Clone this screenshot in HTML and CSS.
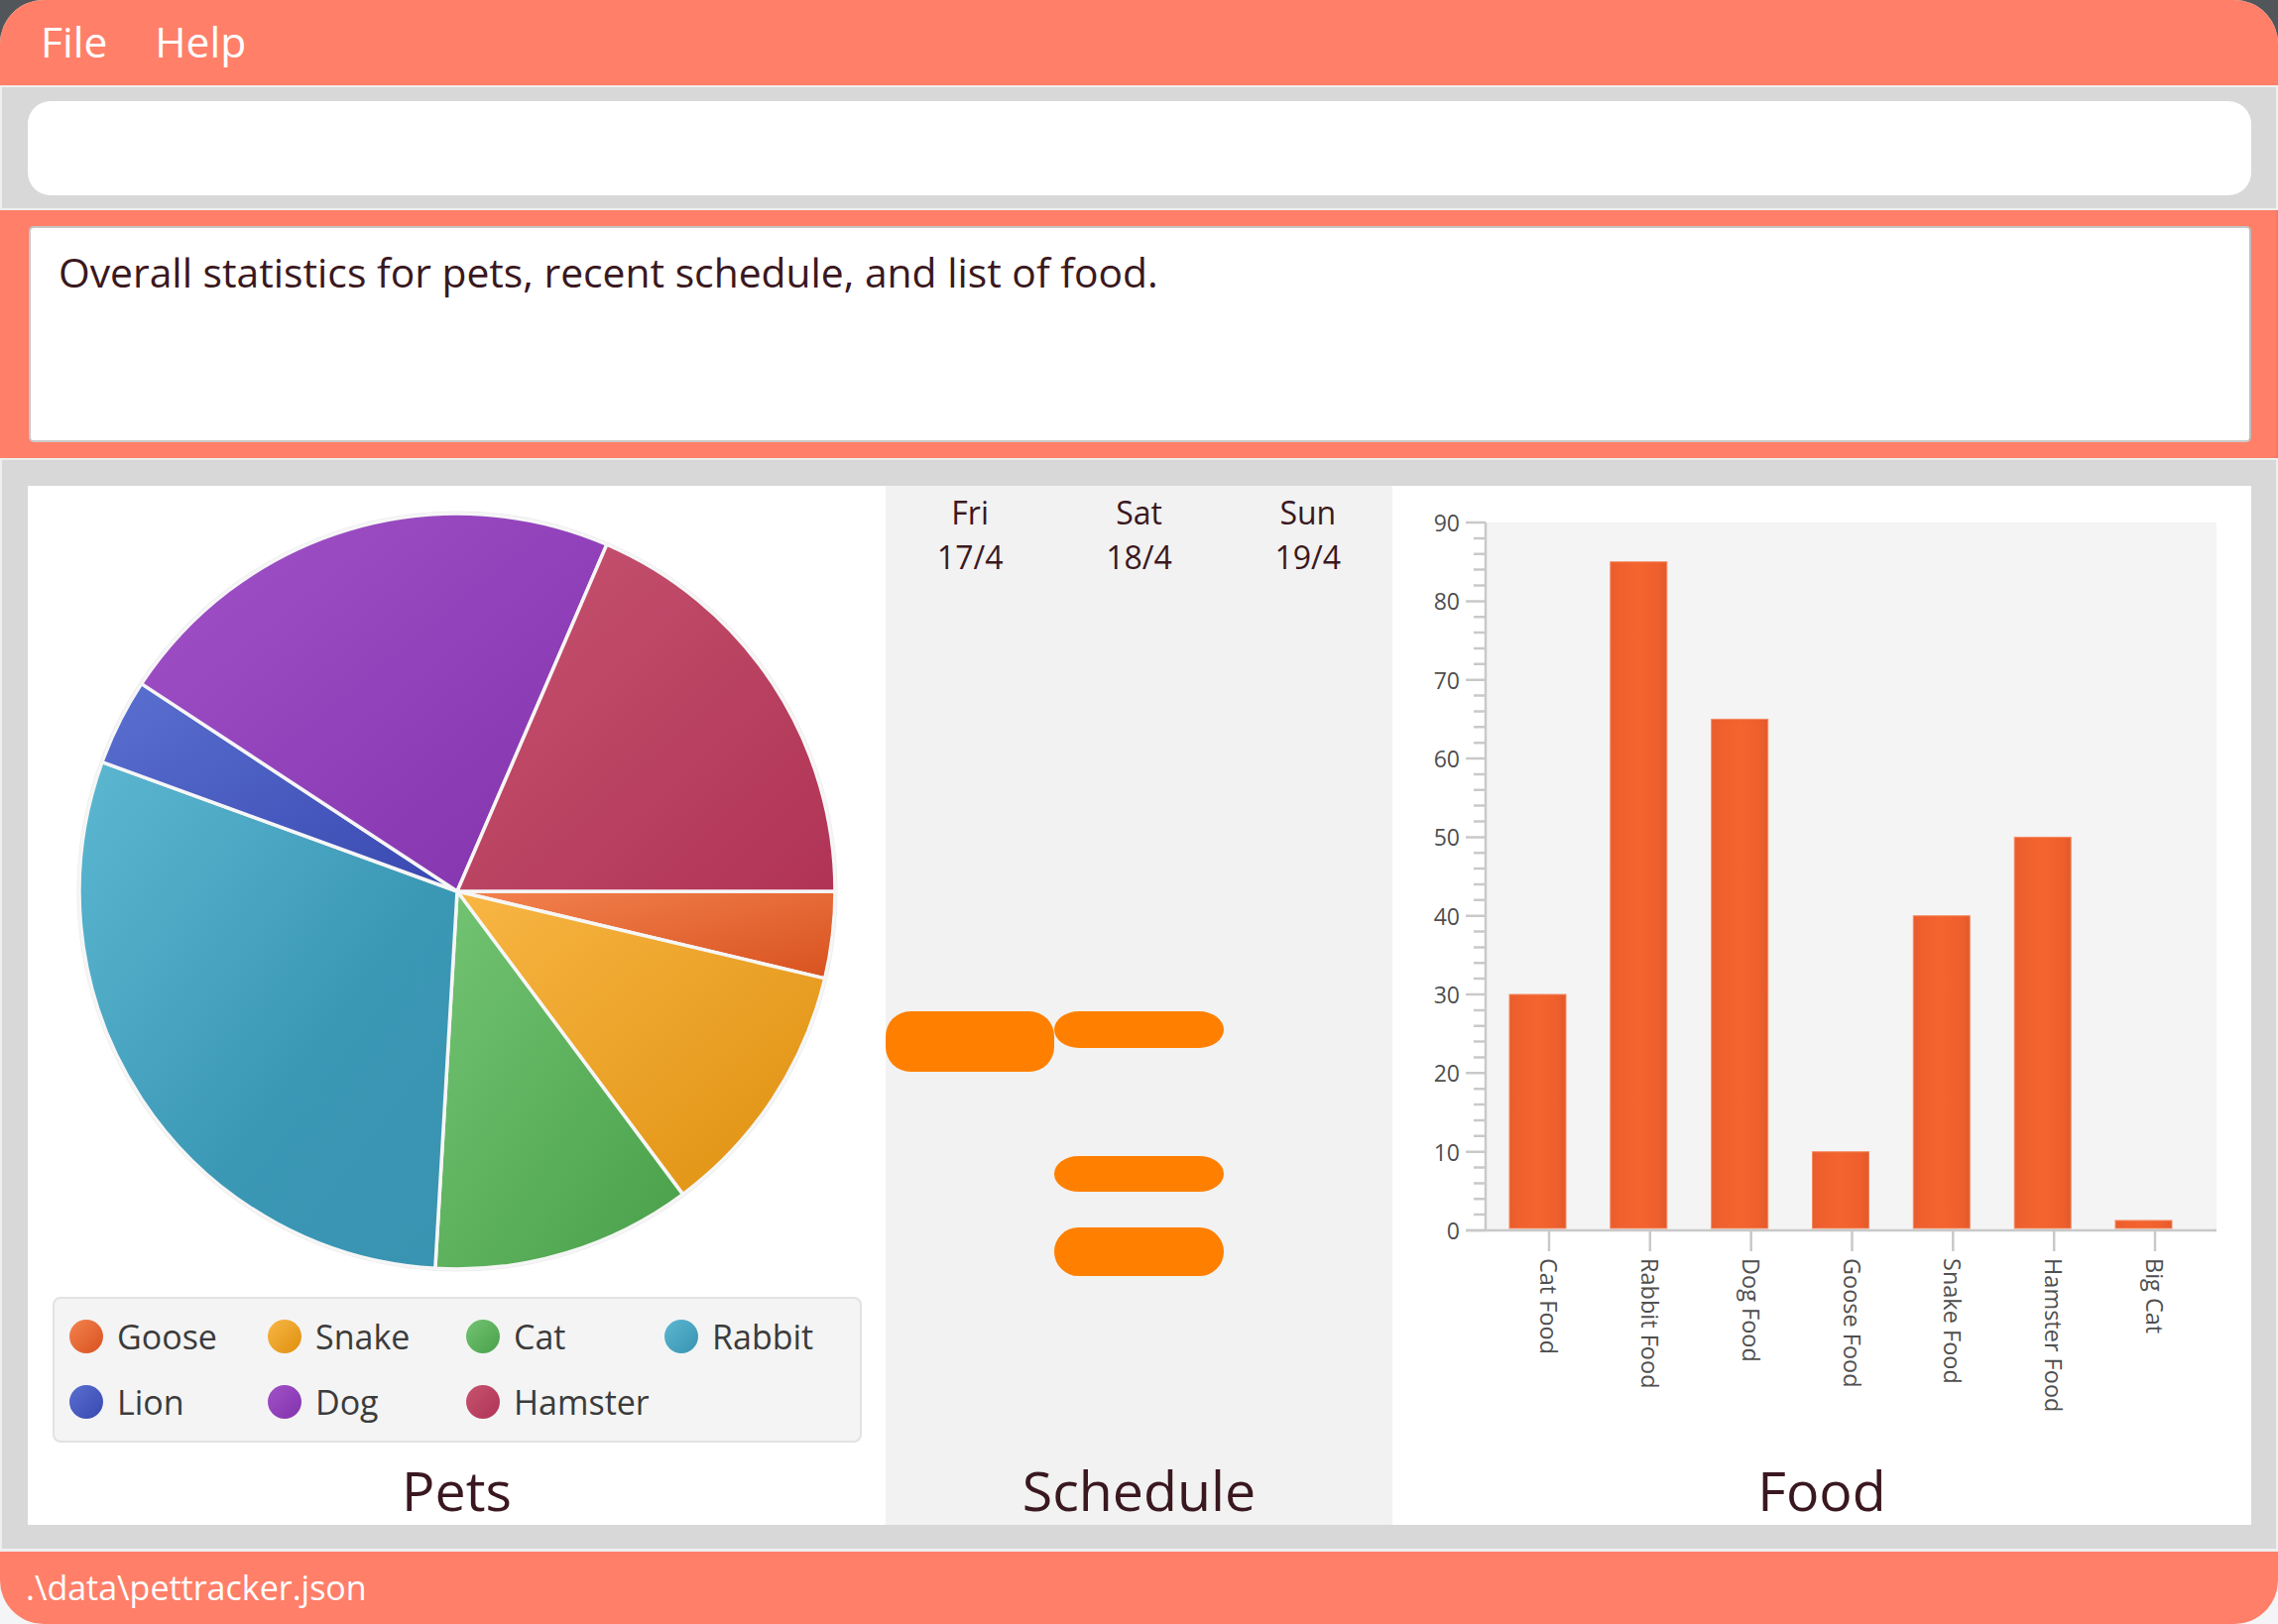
FILE: index.html
```html
<!DOCTYPE html>
<html lang="en">
<head>
<meta charset="utf-8">
<title>Pet Tracker</title>
<link rel="stylesheet" href="styles.css">
</head>
<body>
<div class="app">
  <div class="menubar">
    <span class="menu-item">File</span>
    <span class="menu-item">Help</span>
  </div>

  <div class="cmd-section">
    <div class="cmd-box"></div>
  </div>

  <div class="result-section">
    <div class="result-box">Overall statistics for pets, recent schedule, and list of food.</div>
  </div>

  <div class="main-section">
    <div class="panel">
      <div class="col pets">
        <svg class="pie" width="865" height="800" viewBox="0 0 865 800">
          <defs>
            <linearGradient id="g-goose" x1="0" y1="0" x2="1" y2="1"><stop offset="0" stop-color="#f3834f"/><stop offset="1" stop-color="#d8521f"/></linearGradient>
            <linearGradient id="g-snake" x1="0" y1="0" x2="1" y2="1"><stop offset="0" stop-color="#f8b644"/><stop offset="1" stop-color="#df900f"/></linearGradient>
            <linearGradient id="g-cat" x1="0" y1="0" x2="1" y2="1"><stop offset="0" stop-color="#73c473"/><stop offset="1" stop-color="#49a049"/></linearGradient>
            <linearGradient id="g-rabbit" x1="0" y1="0" x2="1" y2="1"><stop offset="0" stop-color="#5cb7d1"/><stop offset="0.6" stop-color="#3b98b5"/><stop offset="1" stop-color="#3893b1"/></linearGradient>
            <linearGradient id="g-lion" x1="0" y1="0" x2="1" y2="1"><stop offset="0" stop-color="#5a70d0"/><stop offset="1" stop-color="#3847b0"/></linearGradient>
            <linearGradient id="g-dog" x1="0" y1="0" x2="1" y2="1"><stop offset="0" stop-color="#a152c8"/><stop offset="1" stop-color="#8233ad"/></linearGradient>
            <linearGradient id="g-hamster" x1="0" y1="0" x2="1" y2="1"><stop offset="0" stop-color="#c65470"/><stop offset="1" stop-color="#b03355"/></linearGradient>
          </defs>
          <circle cx="433" cy="409" r="382.5" fill="none" stroke="#ececec" stroke-width="2"/>
          <g class="slices">
            <path fill="url(#g-goose)" d="M433 409 L814 409 A381 381 0 0 1 803.73 496.87 Z"/>
            <path fill="url(#g-snake)" d="M433 409 L803.73 496.87 A381 381 0 0 1 660.52 714.61 Z"/>
            <path fill="url(#g-cat)" d="M433 409 L660.52 714.61 A381 381 0 0 1 410.85 789.36 Z"/>
            <path fill="url(#g-rabbit)" d="M433 409 L410.85 789.36 A381 381 0 0 1 74.98 278.69 Z"/>
            <path fill="url(#g-lion)" d="M433 409 L74.98 278.69 A381 381 0 0 1 114.66 199.64 Z"/>
            <path fill="url(#g-dog)" d="M433 409 L114.66 199.64 A381 381 0 0 1 583.91 59.16 Z"/>
            <path fill="url(#g-hamster)" d="M433 409 L583.91 59.16 A381 381 0 0 1 814 409 Z"/>
          </g>
        </svg>
        <div class="legend">
          <div class="legend-item"><span class="dot dot-goose"></span>Goose</div>
          <div class="legend-item"><span class="dot dot-snake"></span>Snake</div>
          <div class="legend-item"><span class="dot dot-cat"></span>Cat</div>
          <div class="legend-item"><span class="dot dot-rabbit"></span>Rabbit</div>
          <div class="legend-item"><span class="dot dot-lion"></span>Lion</div>
          <div class="legend-item"><span class="dot dot-dog"></span>Dog</div>
          <div class="legend-item"><span class="dot dot-hamster"></span>Hamster</div>
        </div>
        <div class="col-title">Pets</div>
      </div>

      <div class="col schedule">
        <div class="days">
          <div class="day">Fri<br>17/4</div>
          <div class="day">Sat<br>18/4</div>
          <div class="day">Sun<br>19/4</div>
        </div>
        <div class="sched-body">
          <div class="sched-col">
            <div class="event" style="top:435px;height:61px"></div>
          </div>
          <div class="sched-col">
            <div class="event ev-short" style="top:435px;height:37px"></div>
            <div class="event ev-short" style="top:581px;height:36px"></div>
            <div class="event" style="top:653px;height:49px"></div>
          </div>
          <div class="sched-col"></div>
        </div>
        <div class="col-title">Schedule</div>
      </div>

      <div class="col food">
        <svg class="bar-chart" width="866" height="978" viewBox="0 0 866 978">
          <defs>
            <linearGradient id="g-bar" x1="0" y1="0" x2="1" y2="0">
              <stop offset="0" stop-color="#e95c2c"/>
              <stop offset="0.15" stop-color="#ef602e"/>
              <stop offset="0.5" stop-color="#f3642f"/>
              <stop offset="0.85" stop-color="#ee5f2d"/>
              <stop offset="1" stop-color="#e3592a"/>
            </linearGradient>
          </defs>
          <rect class="plot-bg" x="95" y="37" width="736" height="714"/>
          <g class="bars">
            <rect x="118" y="513" width="57" height="236"/>
            <rect x="219.8" y="76.7" width="57" height="672.3"/>
            <rect x="321.7" y="235.4" width="57" height="513.6"/>
            <rect x="423.5" y="671.7" width="57" height="77.3"/>
            <rect x="525.3" y="433.7" width="57" height="315.3"/>
            <rect x="627.2" y="354.4" width="57" height="394.6"/>
            <rect x="729" y="741" width="57" height="8"/>
          </g>
          <path class="axis" d="M94 37V752 M74 751H831"/>
          <path class="axis" d="M74 751H94 M74 671.7H94 M74 592.3H94 M74 513H94 M74 433.7H94 M74 354.4H94 M74 275H94 M74 195.7H94 M74 116.4H94 M74 37H94"/>
          <path class="axis" d="M82 735.1H94 M82 719.3H94 M82 703.4H94 M82 687.5H94 M82 655.8H94 M82 639.9H94 M82 624.1H94 M82 608.2H94 M82 576.5H94 M82 560.6H94 M82 544.7H94 M82 528.9H94 M82 497.1H94 M82 481.3H94 M82 465.4H94 M82 449.5H94 M82 417.8H94 M82 401.9H94 M82 386.1H94 M82 370.2H94 M82 338.5H94 M82 322.6H94 M82 306.8H94 M82 290.9H94 M82 259.2H94 M82 243.3H94 M82 227.4H94 M82 211.6H94 M82 179.8H94 M82 164H94 M82 148.1H94 M82 132.2H94 M82 100.5H94 M82 84.6H94 M82 68.8H94 M82 52.9H94"/>
          <path class="axis" d="M158 752V772 M259.8 752V772 M361.7 752V772 M463.5 752V772 M565.3 752V772 M667.2 752V772 M769 752V772"/>
          <g class="y-labels">
            <text x="68" y="751">0</text>
            <text x="68" y="671.7">10</text>
            <text x="68" y="592.3">20</text>
            <text x="68" y="513">30</text>
            <text x="68" y="433.7">40</text>
            <text x="68" y="354.4">50</text>
            <text x="68" y="275">60</text>
            <text x="68" y="195.7">70</text>
            <text x="68" y="116.4">80</text>
            <text x="68" y="37">90</text>
          </g>
          <g class="x-labels">
            <text transform="translate(158 779) rotate(90)">Cat Food</text>
            <text transform="translate(259.8 779) rotate(90)">Rabbit Food</text>
            <text transform="translate(361.7 779) rotate(90)">Dog Food</text>
            <text transform="translate(463.5 779) rotate(90)">Goose Food</text>
            <text transform="translate(565.3 779) rotate(90)">Snake Food</text>
            <text transform="translate(667.2 779) rotate(90)">Hamster Food</text>
            <text transform="translate(769 779) rotate(90)">Big Cat</text>
          </g>
        </svg>
        <div class="col-title">Food</div>
      </div>
    </div>
  </div>

  <div class="statusbar">.\data\pettracker.json</div>
</div>
</body>
</html>
```

FILE: styles.css
```css
* {
  box-sizing: border-box;
}

html, body {
  margin: 0;
  padding: 0;
}

body {
  width: 2297px;
  height: 1638px;
  overflow: hidden;
  background: linear-gradient(to bottom, #50565a 0, #50565a 50%, #f4f5f7 50%, #f4f5f7 100%);
  font-family: "Open Sans", "Noto Sans", "DejaVu Sans", sans-serif;
}

.app {
  width: 2297px;
  height: 1638px;
  border-radius: 44px;
  overflow: hidden;
  background: #efefef;
  display: flex;
  flex-direction: column;
}

/* ---------- menu bar ---------- */
.menubar {
  height: 86px;
  flex: none;
  background: #ff7f69;
  display: flex;
  align-items: center;
  gap: 48px;
  padding-left: 41px;
  padding-bottom: 2px;
}

.menu-item {
  color: #ffffff;
  font-size: 42.5px;
  line-height: 50px;
}

/* ---------- command box ---------- */
.cmd-section {
  height: 122px;
  flex: none;
  margin: 2px 2px 0 2px;
  background: #d8d8d8;
  padding: 14px 25px 13px 26px;
}

.cmd-box {
  height: 100%;
  background: #ffffff;
  border-radius: 23px;
}

/* ---------- result display ---------- */
.result-section {
  height: 250px;
  flex: none;
  margin-top: 2px;
  background: #ff7f69;
  border-right: 2px solid #f57764;
  padding: 16px 25px 16px 29px;
}

.result-box {
  height: 100%;
  background: #ffffff;
  border: 2px solid #c6c6c6;
  border-right-color: #bdbdbd;
  border-bottom-color: #c9c9c9;
  border-radius: 5px;
  padding: 17px 28px;
  color: #3a1820;
  font-size: 40.8px;
  line-height: 54px;
}

/* ---------- main panel ---------- */
.main-section {
  height: 1098px;
  flex: none;
  margin: 2px 2px 0 2px;
  background: #d8d8d8;
  padding: 26px 25px 24px 26px;
}

.panel {
  height: 100%;
  background: #ffffff;
  display: grid;
  grid-template-columns: 865px 511px 1fr;
}

.col {
  display: flex;
  flex-direction: column;
  min-width: 0;
}

.col-title {
  height: 70px;
  flex: none;
  text-align: center;
  color: #3a1820;
  font-size: 55.5px;
  line-height: 70px;
}

/* pets */
.pie {
  display: block;
  flex: none;
}

.slices path {
  stroke: #f6f6f6;
  stroke-width: 3.5;
  stroke-linejoin: round;
}

.legend {
  flex: none;
  margin: 18px 0 13px 25px;
  width: 816px;
  height: 147px;
  background: #f4f4f4;
  border: 2px solid #e2e2e2;
  border-radius: 8px;
  padding: 21px 0 0 15px;
  display: grid;
  grid-template-columns: repeat(4, 200px);
  grid-auto-rows: 34px;
  row-gap: 32px;
}

.legend-item {
  display: flex;
  align-items: center;
  gap: 14px;
  color: #3b3b3b;
  font-size: 34px;
  line-height: 34px;
}

.dot {
  width: 34px;
  height: 34px;
  border-radius: 50%;
  flex: none;
}

.dot-goose { background: linear-gradient(to bottom right, #f3834f, #d8521f); }
.dot-snake { background: linear-gradient(to bottom right, #f8b644, #df900f); }
.dot-cat { background: linear-gradient(to bottom right, #73c473, #49a049); }
.dot-rabbit { background: linear-gradient(to bottom right, #5cb7d1, #3893b1); }
.dot-lion { background: linear-gradient(to bottom right, #5a70d0, #3847b0); }
.dot-dog { background: linear-gradient(to bottom right, #a152c8, #8233ad); }
.dot-hamster { background: linear-gradient(to bottom right, #c65470, #b03355); }

/* schedule */
.schedule {
  background: #f2f2f2;
}

.days {
  height: 95px;
  flex: none;
  display: grid;
  grid-template-columns: repeat(3, 1fr);
  padding-top: 4px;
}

.day {
  text-align: center;
  color: #3a1820;
  font-size: 32px;
  line-height: 45px;
}

.sched-body {
  flex: 1;
  display: grid;
  grid-template-columns: repeat(3, 1fr);
}

.sched-col {
  position: relative;
}

.event {
  position: absolute;
  left: 0;
  right: 0;
  background: #ff8000;
  border-radius: 25px;
}

.ev-short {
  border-radius: 25px / 50%;
}

/* food */
.bar-chart {
  display: block;
  flex: none;
}

.plot-bg {
  fill: #f4f4f4;
}

.bars rect {
  fill: url(#g-bar);
  stroke: #f58a62;
  stroke-width: 1;
}

.axis {
  fill: none;
  stroke: #c9c9c9;
  stroke-width: 2.5;
}

.y-labels text {
  font-family: "Open Sans", "Noto Sans", sans-serif;
  font-size: 23px;
  fill: #4f4f4f;
  text-anchor: end;
  dominant-baseline: central;
}

.x-labels text {
  font-family: "Open Sans", "Noto Sans", sans-serif;
  font-size: 23.5px;
  fill: #4f4f4f;
  dominant-baseline: central;
}

/* ---------- status bar ---------- */
.statusbar {
  height: 73px;
  flex: none;
  margin-top: 3px;
  background: #ff7f69;
  color: #ffffff;
  font-size: 34px;
  line-height: 73px;
  padding-left: 26px;
  white-space: nowrap;
}
```
